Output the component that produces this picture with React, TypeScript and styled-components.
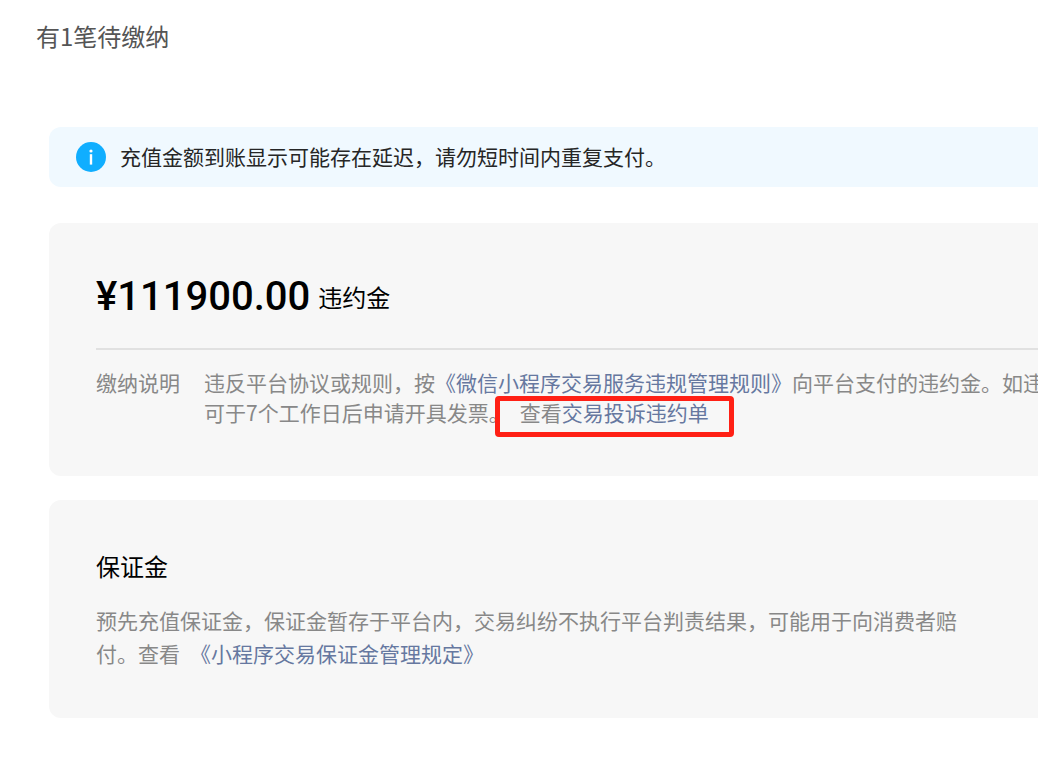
import React from "react";
import styled, { createGlobalStyle } from "styled-components";

const GlobalStyle = createGlobalStyle`
  * {
    box-sizing: border-box;
  }
  body {
    margin: 0;
    background: #ffffff;
    color: #000000;
    font-family: "Noto Sans CJK SC", sans-serif;
    font-size: 21px;
    font-weight: 400;
    overflow-x: hidden;
  }
  h1, h2, p, dl, dt, dd {
    margin: 0;
    font-weight: inherit;
  }
`;

const Page = styled.main`
  padding: 18px 0 60px;
  overflow: hidden;
`;

const PageTitle = styled.h1`
  padding-left: 36px;
  font-size: 24px;
  line-height: 36px;
  color: #555555;
`;

const Content = styled.div`
  display: flex;
  flex-direction: column;
  gap: 24px;
  margin: 73px 0 0 49px;
`;

const Notice = styled.div`
  display: flex;
  align-items: center;
  gap: 14px;
  min-height: 60px;
  margin-bottom: 12px;
  padding: 0 27px;
  border-radius: 12px 0 0 12px;
  background: #f0f9ff;
  color: #262626;
  line-height: 30px;
`;

const NoticeText = styled.p`
  padding-bottom: 2px;
`;

const Card = styled.section`
  padding: 48px 0 48px 47px;
  border-radius: 12px 0 0 12px;
  background: #f7f7f7;
`;

const AmountRow = styled.div`
  display: flex;
  align-items: center;
  gap: 8px;
  padding-bottom: 25px;
  border-bottom: 2px solid #e1e1e1;
`;

const Amount = styled.strong`
  font-family: Roboto, sans-serif;
  font-size: 40px;
  font-weight: 500;
  line-height: 52px;
`;

const CardTitle = styled.h2`
  font-size: 24px;
  line-height: 36px;
`;

const Details = styled.dl`
  display: flex;
  gap: 24px;
  padding: 17px 0 1px;
  color: #888888;
  line-height: 30px;
  white-space: nowrap;
`;

const Paragraph = styled.p`
  max-width: 870px;
  padding-top: 20px;
  color: #888888;
  line-height: 33px;
`;

const Link = styled.a<{ $spaced?: boolean }>`
  margin-left: ${(p) => (p.$spaced ? 10 : 0)}px;
  color: #6678a0;
  text-decoration: none;
`;

const Marked = styled.span`
  position: relative;
  display: inline-block;
  margin-left: 10px;

  &::after {
    content: "";
    position: absolute;
    inset: -1px -25px -10px -25px;
    border: 5px solid #ff2015;
    border-radius: 4px;
    pointer-events: none;
  }
`;

const InfoIcon = () => (
  <svg width="30" height="30" viewBox="0 0 30 30" aria-hidden="true">
    <circle cx="15" cy="15" r="15" fill="#10aeff" />
    <circle cx="15" cy="9" r="1.6" fill="#ffffff" />
    <rect x="13.8" y="12.2" width="2.4" height="10.4" fill="#ffffff" />
  </svg>
);

export default function App() {
  return (
    <>
      <GlobalStyle />
      <Page lang="zh-CN">
        <PageTitle>有1笔待缴纳</PageTitle>
        <Content>
          <Notice role="status">
            <InfoIcon />
            <NoticeText>充值金额到账显示可能存在延迟，请勿短时间内重复支付。</NoticeText>
          </Notice>

          <Card>
            <AmountRow>
              <Amount>¥111900.00</Amount>
              <CardTitle>违约金</CardTitle>
            </AmountRow>
            <Details>
              <dt>缴纳说明</dt>
              <dd>
                违反平台协议或规则，按
                <Link href="#rules">《微信小程序交易服务违规管理规则》</Link>
                向平台支付的违约金。如违
                <br />
                可于7个工作日后申请开具发票。
                <Marked>
                  查看<Link href="#complaints">交易投诉违约单</Link>
                </Marked>
              </dd>
            </Details>
          </Card>

          <Card>
            <CardTitle>保证金</CardTitle>
            <Paragraph>
              预先充值保证金，保证金暂存于平台内，交易纠纷不执行平台判责结果，可能用于向消费者赔付。查看
              <Link href="#deposit" $spaced>
                《小程序交易保证金管理规定》
              </Link>
            </Paragraph>
          </Card>
        </Content>
      </Page>
    </>
  );
}
